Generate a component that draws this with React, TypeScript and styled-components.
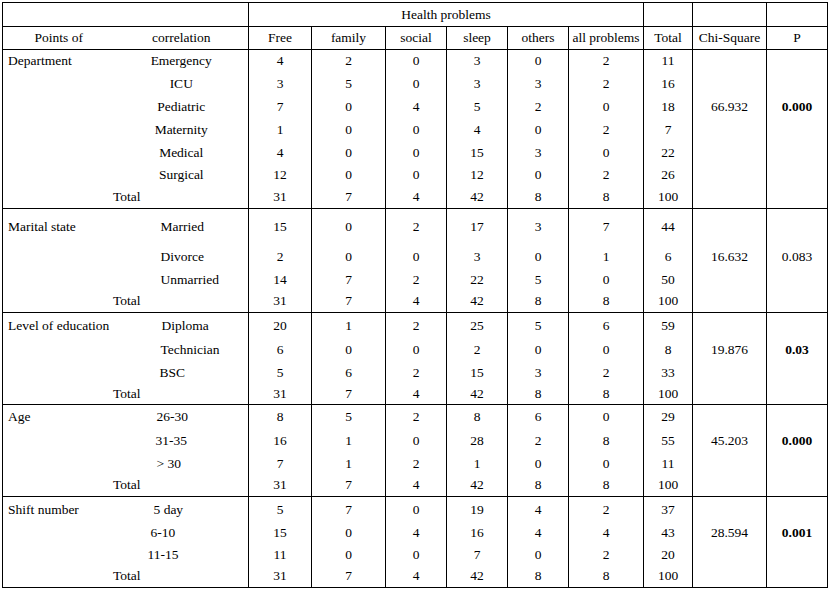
import React from "react";
import styled, { createGlobalStyle } from "styled-components";

const GlobalStyle = createGlobalStyle`
  body {
    margin: 0;
    padding: 2px;
    background: #fff;
    font-family: "Liberation Serif", "Times New Roman", serif;
    color: #000;
  }
`;

const Table = styled.table`
  border-collapse: collapse;
  table-layout: fixed;
  width: 826px;
  font-family: "Liberation Serif", "Times New Roman", serif;
  font-size: 13.5px;
  line-height: 16px;
  color: #000;

  tbody, thead {
    border: 1px solid #000;
  }
`;

const Row = styled.tr<{ $h: number }>`
  height: ${(p) => p.$h}px;
`;

const Head = styled.th<{ $noLeft?: boolean; $noRight?: boolean }>`
  font-weight: normal;
  text-align: center;
  padding: 0;
  border: 1px solid #000;
  ${(p) => (p.$noLeft ? "border-left: none;" : "")}
  ${(p) => (p.$noRight ? "border-right: none;" : "")}
`;

const Label = styled.td`
  padding: 0 0 0 5px;
  text-align: left;
  border-left: 1px solid #000;
  white-space: nowrap;
`;

const Sub = styled.td<{ $pad?: number }>`
  padding: 0 0 0 ${(p) => p.$pad ?? 0}px;
  text-align: ${(p) => (p.$pad === undefined ? "center" : "left")};
  border-right: 1px solid #000;
  white-space: nowrap;
`;

const TotalLabel = styled.td`
  padding: 0 0 0 110px;
  text-align: left;
  border-left: 1px solid #000;
  border-right: 1px solid #000;
`;

const Num = styled.td<{ $bold?: boolean }>`
  padding: 0;
  text-align: center;
  border-left: 1px solid #000;
  border-right: 1px solid #000;
  font-weight: ${(p) => (p.$bold ? "bold" : "normal")};
`;

type Section = {
  label: string;
  rows: { name: string; pad?: number; values: number[] }[];
  heights: number[];
  chi: string;
  p: string;
  bold: boolean;
  statRow: number;
};

const totals = [31, 7, 4, 42, 8, 8, 100];

const sections: Section[] = [
  {
    label: "Department",
    chi: "66.932",
    p: "0.000",
    bold: true,
    statRow: 2,
    heights: [23, 23, 23, 23, 22, 22, 23],
    rows: [
      { name: "Emergency", values: [4, 2, 0, 3, 0, 2, 11] },
      { name: "ICU", values: [3, 5, 0, 3, 3, 2, 16] },
      { name: "Pediatric", values: [7, 0, 4, 5, 2, 0, 18] },
      { name: "Maternity", values: [1, 0, 0, 4, 0, 2, 7] },
      { name: "Medical", values: [4, 0, 0, 15, 3, 0, 22] },
      { name: "Surgical", values: [12, 0, 0, 12, 0, 2, 26] },
    ],
  },
  {
    label: "Marital state",
    chi: "16.632",
    p: "0.083",
    bold: false,
    statRow: 1,
    heights: [37, 23, 22, 22],
    rows: [
      { name: "Married", pad: 46, values: [15, 0, 2, 17, 3, 7, 44] },
      { name: "Divorce", pad: 46, values: [2, 0, 0, 3, 0, 1, 6] },
      { name: "Unmarried", pad: 46, values: [14, 7, 2, 22, 5, 0, 50] },
    ],
  },
  {
    label: "Level of education",
    chi: "19.876",
    p: "0.03",
    bold: true,
    statRow: 1,
    heights: [26, 23, 22, 21],
    rows: [
      { name: "Diploma", pad: 47, values: [20, 1, 2, 25, 5, 6, 59] },
      { name: "Technician", pad: 46, values: [6, 0, 0, 2, 0, 0, 8] },
      { name: "BSC", pad: 45, values: [5, 6, 2, 15, 3, 2, 33] },
    ],
  },
  {
    label: "Age",
    chi: "45.203",
    p: "0.000",
    bold: true,
    statRow: 1,
    heights: [25, 23, 22, 22],
    rows: [
      { name: "26-30", pad: 42, values: [8, 5, 2, 8, 6, 0, 29] },
      { name: "31-35", pad: 41, values: [16, 1, 0, 28, 2, 8, 55] },
      { name: "> 30", pad: 42, values: [7, 1, 2, 1, 0, 0, 11] },
    ],
  },
  {
    label: "Shift number",
    chi: "28.594",
    p: "0.001",
    bold: true,
    statRow: 1,
    heights: [26, 21, 22, 22],
    rows: [
      { name: "5 day", pad: 39, values: [5, 7, 0, 19, 4, 2, 37] },
      { name: "6-10", pad: 36, values: [15, 0, 4, 16, 4, 4, 43] },
      { name: "11-15", pad: 33, values: [11, 0, 0, 7, 0, 2, 20] },
    ],
  },
];

const widths = [112, 134, 63, 74, 61, 61, 61, 75, 49, 74, 61];

function SectionBody({ s }: { s: Section }) {
  return (
    <tbody>
      {s.rows.map((r, i) => (
        <Row key={r.name} $h={s.heights[i]}>
          <Label>{i === 0 ? s.label : ""}</Label>
          <Sub $pad={r.pad}>{r.name}</Sub>
          {r.values.map((v, j) => (
            <Num key={j}>{v}</Num>
          ))}
          <Num>{i === s.statRow ? s.chi : ""}</Num>
          <Num $bold={s.bold}>{i === s.statRow ? s.p : ""}</Num>
        </Row>
      ))}
      <Row $h={s.heights[s.heights.length - 1]}>
        <TotalLabel colSpan={2}>Total</TotalLabel>
        {totals.map((v, j) => (
          <Num key={j}>{v}</Num>
        ))}
        <Num />
        <Num />
      </Row>
    </tbody>
  );
}

export default function App() {
  return (
    <>
      <GlobalStyle />
      <Table>
        <colgroup>
          {widths.map((w, i) => (
            <col key={i} style={{ width: w }} />
          ))}
        </colgroup>
        <thead>
          <Row $h={24}>
            <Head colSpan={2} />
            <Head colSpan={6}>Health problems</Head>
            <Head />
            <Head />
            <Head />
          </Row>
          <Row $h={23}>
            <Head $noRight>Points of</Head>
            <Head $noLeft>correlation</Head>
            <Head>Free</Head>
            <Head>family</Head>
            <Head>social</Head>
            <Head>sleep</Head>
            <Head>others</Head>
            <Head>all problems</Head>
            <Head>Total</Head>
            <Head>Chi-Square</Head>
            <Head>P</Head>
          </Row>
        </thead>
        {sections.map((s) => (
          <SectionBody key={s.label} s={s} />
        ))}
      </Table>
    </>
  );
}
